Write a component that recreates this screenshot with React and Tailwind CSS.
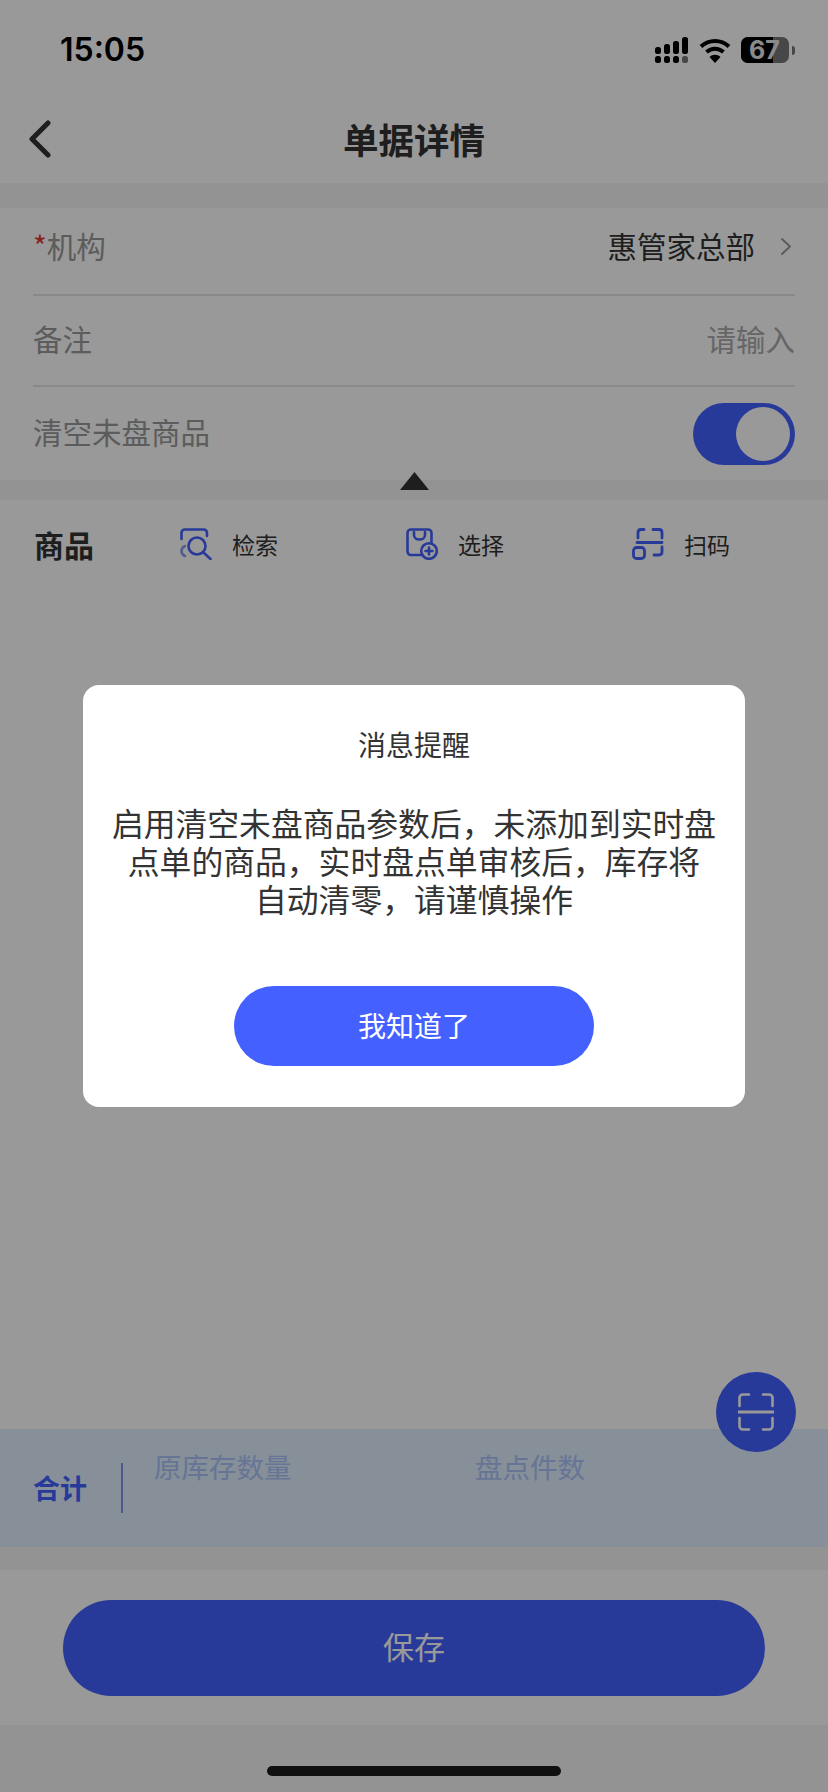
import React from "react";

const SignalIcon = () => (
  <svg width="34" height="26" viewBox="0 0 34 26" fill="#000">
    {/* barras superiores */}
    <rect x="0" y="10" width="6" height="7" rx="2.5" />
    <rect x="9" y="7" width="6" height="10" rx="2.5" />
    <rect x="18" y="4" width="6" height="13" rx="2.5" />
    <rect x="27" y="0" width="6" height="17" rx="2.5" />
    {/* barras inferiores */}
    <rect x="0" y="19" width="6" height="7" rx="2.5" />
    <rect x="9" y="19" width="6" height="7" rx="2.5" />
    <rect x="18" y="19" width="6" height="7" rx="2.5" />
    <rect x="27" y="19" width="6" height="7" rx="2.5" fill="#777" />
  </svg>
);

const WifiIcon = () => (
  <svg width="32" height="25" viewBox="0 0 32 25" fill="none" stroke="#000" strokeWidth="4">
    <path d="M2 8.5C10 1 22 1 30 8.5" />
    <path d="M7.5 14C12.5 9.5 19.5 9.5 24.5 14" />
    <path d="M16 25L10.5 19C13.5 16 18.5 16 21.5 19Z" fill="#000" stroke="none" />
  </svg>
);

const Battery = () => (
  <div className="flex items-center gap-[3px]">
    <div className="relative flex h-[26px] w-[48px] rounded-[7px] bg-[#777]">
      <div className="h-full w-[32px] rounded-l-[7px] bg-black" />
      <span className="absolute inset-y-0 left-[8px] flex items-center text-[25px] font-bold leading-none text-[#e6e6e6] font-['Inter',sans-serif]">
        67
      </span>
    </div>
    <div className="h-[9px] w-[3px] rounded-r-sm bg-[#777]" />
  </div>
);

const SearchIcon = () => (
  <svg width="32" height="32" viewBox="0 0 32 32" fill="none" stroke="#4461ff" strokeWidth="2.6" strokeLinecap="round">
    <path d="M1.5 11V5C1.5 3 3 1.5 5 1.5H23.5C25.5 1.5 27 3 27 5V8" />
    <path d="M5 18C2.5 19 1.5 21 1.5 23C1.5 25 2.5 27 5 28" stroke="#8f9dec" />
    <circle cx="17" cy="18" r="8.5" />
    <path d="M24 25L30.5 31" />
  </svg>
);

const SelectIcon = () => (
  <svg width="32" height="32" viewBox="0 0 32 32" fill="none" stroke="#4461ff" strokeWidth="2.6" strokeLinecap="round">
    <path d="M15 27H5C3 27 1.5 25.5 1.5 23.5V5C1.5 3 3 1.5 5 1.5H22C24 1.5 25.5 3 25.5 5V14" />
    <path d="M8 4V7C8 13 19 13 19 7V4" />
    <circle cx="23" cy="23" r="7.8" />
    <path d="M23 19.5V26.5M19.5 23H26.5" />
  </svg>
);

const ScanIcon = () => (
  <svg width="32" height="32" viewBox="0 0 32 32" fill="none" stroke="#4461ff" strokeWidth="2.8" strokeLinecap="round">
    <path d="M6 10V4.5C6 2.8 7 1.5 9 1.5H12" />
    <path d="M21 1.5H27C29 1.5 30 2.8 30 4.5V10" />
    <path d="M5 14.5H30" />
    <rect x="1.5" y="19.5" width="11" height="11" rx="3" />
    <path d="M30 19V24C30 26 29 27 27 27H22" />
  </svg>
);

const FabScanIcon = () => (
  <svg width="36" height="38" viewBox="0 0 36 38" fill="none" stroke="#fff" strokeWidth="2.6" strokeLinecap="round">
    <path d="M1.5 13V5C1.5 3 3 1.5 5 1.5H11" />
    <path d="M25 1.5H31C33 1.5 34.5 3 34.5 5V13" />
    <path d="M0 19H36" strokeWidth="3" />
    <path d="M1.5 25V33C1.5 35 3 36.5 5 36.5H11" />
    <path d="M25 36.5H31C33 36.5 34.5 35 34.5 33V25" />
  </svg>
);

const acoes = [
  { id: "busca", label: "检索", Icon: SearchIcon },
  { id: "selecao", label: "选择", Icon: SelectIcon },
  { id: "scan", label: "扫码", Icon: ScanIcon },
];

export default function App() {
  return (
    <div className="relative flex h-[1792px] w-[828px] flex-col overflow-hidden bg-[#f5f5f5] font-['Noto_Sans_CJK_SC',sans-serif]">
      {/* Status bar */}
      <div className="flex h-[100px] items-center justify-between bg-white pl-[60px] pr-[33px]">
        <span className="text-[32px] font-semibold leading-none text-black font-['Inter',sans-serif]">
          15:05
        </span>
        <div className="flex items-center gap-[10px]">
          <SignalIcon />
          <WifiIcon />
          <Battery />
        </div>
      </div>

      {/* Header */}
      <div className="grid h-[83px] grid-cols-[1fr_auto_1fr] items-center bg-white px-[28px] pb-[6px]">
        <svg width="24" height="38" viewBox="0 0 24 38" fill="none" stroke="#333" strokeWidth="5" strokeLinecap="round" strokeLinejoin="round">
          <path d="M20 3L4 19L20 35" />
        </svg>
        <h1 className="text-[35.5px] font-bold leading-none text-[#333]">单据详情</h1>
        <div />
      </div>

      <div className="h-[25px]" />

      {/* Form */}
      <div className="flex flex-col bg-white px-[33px]">
        <div className="flex h-[88px] items-center justify-between border-b-2 border-[#e5e5e5] pb-[10px]">
          <span className="text-[29.5px] leading-none text-[#999]">
            <span className="text-[#e53935]">*</span>机构
          </span>
          <div className="flex items-center gap-[25px] pr-[3px]">
            <span className="text-[29.5px] leading-none text-[#333]">惠管家总部</span>
            <svg width="12" height="19" viewBox="0 0 12 19" fill="none" stroke="#999" strokeWidth="2" strokeLinecap="round" strokeLinejoin="round">
              <path d="M2 2L10 9.5L2 17" />
            </svg>
          </div>
        </div>
        <div className="flex h-[91px] items-center justify-between border-b-2 border-[#e5e5e5] pb-[4px]">
          <span className="text-[29.5px] leading-none text-[#999]">备注</span>
          <span className="text-[29.5px] leading-none text-[#aaa]">请输入</span>
        </div>
        <div className="flex h-[93px] items-center justify-between">
          <span className="pb-[4px] text-[29.5px] leading-none text-[#999]">清空未盘商品</span>
          <div className="flex h-[62px] w-[102px] items-center justify-end rounded-full bg-[#4461ff] pr-[5px]">
            <div className="h-[54px] w-[54px] rounded-full bg-white" />
          </div>
        </div>
      </div>

      {/* Collapse handle */}
      <div className="flex h-[20px] justify-center">
        <svg className="-mt-[8px]" width="29" height="18" viewBox="0 0 29 18" fill="#333">
          <path d="M14.5 0L29 18H0Z" />
        </svg>
      </div>

      {/* Produtos */}
      <div className="flex flex-1 flex-col bg-white">
        <div className="flex h-[88px] items-center pl-[34px]">
          <span className="w-[146px] shrink-0 text-[30px] font-bold leading-none text-[#333]">商品</span>
          <div className="grid grid-cols-[226px_226px_auto]">
            {acoes.map(({ id, label, Icon }) => (
              <div key={id} className="flex items-center gap-[20px]">
                <Icon />
                <span className="text-[23px] leading-none text-[#333]">{label}</span>
              </div>
            ))}
          </div>
        </div>
      </div>

      {/* Totais */}
      <div className="flex h-[118px] bg-[#e1eeff] pl-[33px]">
        <span className="w-[88px] self-center pb-[2px] text-[27px] font-bold leading-none text-[#4461ff]">合计</span>
        <div className="h-[50px] w-[2px] self-center bg-[#7f95e8]" />
        <div className="ml-[31px] grid grid-cols-[321px_auto] pt-[18px]">
          <span className="text-[27.5px] leading-[38px] text-[#abc4f8]">原库存数量</span>
          <span className="text-[27.5px] leading-[38px] text-[#abc4f8]">盘点件数</span>
        </div>
      </div>

      <div className="h-[23px]" />

      {/* Footer */}
      <div className="flex h-[155px] items-start justify-center bg-white pt-[30px]">
        <button className="h-[96px] w-[702px] rounded-full bg-[#4461ff] pb-[6px] text-[31px] leading-none text-white">
          保存
        </button>
      </div>

      <div className="flex h-[67px] items-end justify-center pb-[16px]">
        <div className="h-[10px] w-[294px] rounded-full bg-[#1c1c1c]" />
      </div>

      {/* FAB */}
      <button className="absolute left-[716px] top-[1372px] flex h-[80px] w-[80px] items-center justify-center rounded-full bg-[#4461ff]">
        <FabScanIcon />
      </button>

      {/* Overlay + modal */}
      <div className="absolute inset-0 flex items-center justify-center bg-black/40">
        <div className="flex h-[422px] w-[662px] flex-col items-center rounded-[16px] bg-white pt-[41px]">
          <h2 className="text-[28px] leading-[36px] text-[#333]">消息提醒</h2>
          <p className="mt-[41px] text-center text-[31.8px] leading-[38px] text-[#333]">
            启用清空未盘商品参数后，未添加到实时盘
            <br />
            点单的商品，实时盘点单审核后，库存将
            <br />
            自动清零，请谨慎操作
          </p>
          <button className="mt-[69px] h-[80px] w-[360px] rounded-full bg-[#4461ff] pb-[2px] text-[28px] leading-none text-white">
            我知道了
          </button>
        </div>
      </div>
    </div>
  );
}
